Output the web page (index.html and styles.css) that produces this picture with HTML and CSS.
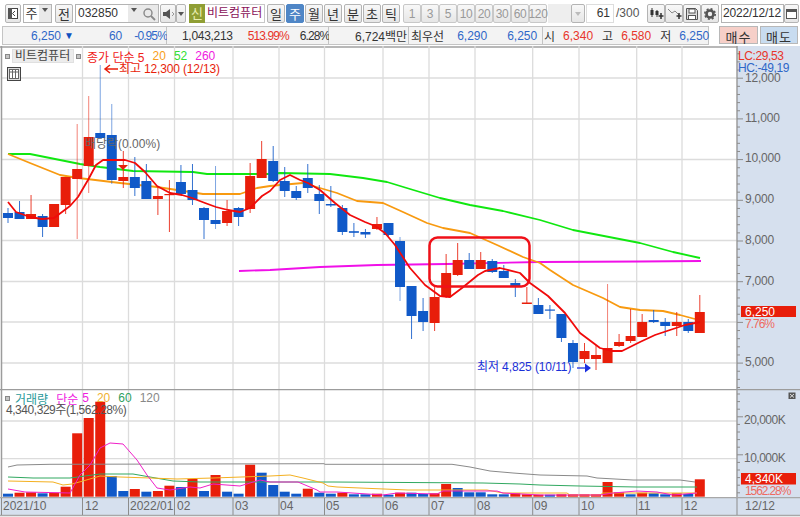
FILE: index.html
```html
<!DOCTYPE html>
<html lang="ko">
<head>
<meta charset="utf-8">
<title>비트컴퓨터 차트</title>
<link rel="stylesheet" href="styles.css">
</head>
<body>
<div class="app">
  <div class="toolbar">
    <button class="btn w16"><svg width="12" height="13" viewBox="0 0 12 13"><rect x="1.5" y="1.5" width="9" height="10" fill="#fff" stroke="#444"/><rect x="1" y="1" width="4" height="11" fill="#555"/><path d="M8 4 5.5 6.5 8 9" fill="none" stroke="#444"/></svg></button>
    <div class="combo m2 w28"><span class="field center">주</span><span class="drop"></span></div>
    <button class="btn w18 m3">전</button>
    <div class="combo m2 w84">
      <span class="field code">032850</span><span class="drop"></span>
      <span class="glyph"><svg width="14" height="14" viewBox="0 0 14 14"><circle cx="6" cy="6" r="4" fill="none" stroke="#888" stroke-width="1.4"/><path d="M9 9l4 4" stroke="#888" stroke-width="1.8"/></svg></span>
    </div>
    <button class="btn w16 m1"><svg width="13" height="12" viewBox="0 0 13 12"><path d="M1 4h3l4-3v10L4 8H1z" fill="#555"/><path d="M10 4l2 2-2 2" fill="none" stroke="#999"/></svg></button>
    <button class="btn w10 tri"></button>
    <span class="new m3">신</span>
    <span class="stock">비트컴퓨터</span>
    <div class="seg m2">
      <button class="btn w18">일</button><button class="btn w18 active">주</button><button class="btn w18">월</button><button class="btn w18">년</button>
    </div>
    <div class="seg m2">
      <button class="btn w18">분</button><button class="btn w18">초</button><button class="btn w18">틱</button>
    </div>
    <div class="seg m3 dim">
      <button class="btn w18">1</button><button class="btn w18">3</button><button class="btn w18">5</button><button class="btn w18">10</button><button class="btn w18">20</button><button class="btn w18">30</button><button class="btn w18">60</button><button class="btn w18">120</button>
    </div>
    <span class="blank m1"></span>
    <button class="btn w14 tri pale"></button>
    <span class="count m1">61</span>
    <span class="total">/300</span>
    <div class="seg icons">
      <button class="btn w18"><svg width="15" height="13" viewBox="0 0 15 13"><path d="M3 1v9M8 3v7" stroke="#333"/><rect x="1.5" y="3" width="3" height="5" fill="#333"/><rect x="6.5" y="4" width="3" height="4" fill="#333"/><path d="M12 6v6M9.500 9h5" stroke="#333" stroke-width="1.500"/></svg></button>
      <button class="btn w18"><svg width="15" height="13" viewBox="0 0 15 13"><path d="M1 2l4 4 3-2 4 4" fill="none" stroke="#888"/><path d="M12 6v6M9.500 9h5" stroke="#333" stroke-width="1.500"/></svg></button>
      <button class="btn w18"><svg width="14" height="14" viewBox="0 0 14 14"><path d="M1.500 1.500h9l2 2v9h-11z" fill="#ddd" stroke="#555"/><rect x="4" y="2" width="6" height="4" fill="#fff" stroke="#555"/><rect x="3.500" y="8.500" width="7" height="4" fill="#fff" stroke="#555"/></svg></button>
      <button class="btn w18"><svg width="14" height="14" viewBox="0 0 14 14"><circle cx="7" cy="7" r="3.500" fill="none" stroke="#555" stroke-width="2.600"/><circle cx="7" cy="7" r="5.200" fill="none" stroke="#555" stroke-width="1.600" stroke-dasharray="2 2.080"/></svg></button>
    </div>
    <span class="date m2">2022/12/12</span>
    <button class="btn w15"><svg width="11" height="11" viewBox="0 0 11 11"><rect x="0.500" y="1.500" width="10" height="9" fill="#fff" stroke="#555"/><rect x="0.500" y="1.500" width="10" height="2.500" fill="#555"/></svg></button>
  </div>

  <div class="quotebar">
    <div class="cell c1"><span class="blue">6,250</span><span class="down blue">▼</span><span class="blue q60">60</span><span class="blue q95 pct">-0.95%</span></div>
    <div class="cell c2"><span class="qvol">1,043,213</span><span class="red qpct pct">513.99%</span><span class="qrate pct">6.28%</span></div>
    <div class="cell c3"><span>6,724백만</span></div>
    <div class="cell c4"><span class="kr">최우선</span><span class="blue b1">6,290</span><span class="blue b2">6,250</span></div>
    <div class="cell c5"><span>시</span><span class="red v1">6,340</span><span class="k">고</span><span class="red v1">6,580</span><span class="k">저</span><span class="blue v1">6,250</span></div>
    <button class="trade buy">매수</button>
    <button class="trade sell">매도</button>
  </div>

  <div class="chart">
    <div class="pane price-pane">
      <svg id="price" class="plot" viewBox="0 46 800 343" width="800" height="343">
        <rect class="axis-bg" x="737" y="46" width="63" height="343"/>
        <g id="price-grid"></g>
        <g id="price-ticks"></g>
        <g id="ma260"></g>
        <g id="ma52"></g>
        <g id="ma20"></g>
        <g id="candles"></g>
        <g id="ma5"></g>
        <rect class="signal" x="429.500" y="237.500" width="100" height="49" rx="8"/>
        <text class="t-note" x="85" y="148">배당락(0.00%)</text>
        <path class="fill-red" d="M118 165h10l-5 5z"/>
        <path class="arrow-red" d="M106 69h12M110 65l-5 4 5 4"/>
        <text class="t-high" x="119" y="73">최고 12,300 (12/13)</text>
        <text class="t-low" x="477" y="371">최저 4,825 (10/11)</text>
        <path class="arrow-blue" d="M577 368h9"/><path class="fill-blue" d="M585 363.500l6 4.500-6 4.500z"/>
        <g class="t-axis">
          <text x="745" y="82">12,000</text><text x="745" y="122">11,000</text><text x="745" y="162">10,000</text><text x="745" y="203">9,000</text><text x="745" y="244">8,000</text><text x="745" y="285">7,000</text><text x="745" y="366">5,000</text>
        </g>
        <text class="t-lc" x="738" y="60">LC:29,53</text>
        <text class="t-hc" x="738" y="72">HC:-49,19</text>
        <rect class="fill-red" x="741" y="306" width="55" height="11"/>
        <text class="t-tag" x="745" y="316">6,250</text>
        <text class="t-pct" x="745" y="328">7.76%</text>
      </svg>
      <div class="legend">
        <span class="sq"></span><span class="name">비트컴퓨터</span><span class="sq"></span>
        <span class="l-red ml6">종가 단순 5</span><span class="l-orange ml8">20</span><span class="l-green ml8">52</span><span class="l-mag ml8">260</span>
      </div>
      <span class="tbl-icon"><svg width="14" height="14" viewBox="0 0 14 14"><rect x="0.500" y="0.500" width="13" height="13" fill="#ddd" stroke="#444"/><rect x="2.500" y="2.500" width="9" height="9" fill="#fff" stroke="#666"/><path d="M2.500 5h9M5.500 2.500v9M8.500 2.500v9" stroke="#666"/></svg></span>
    </div>

    <div class="pane volume-pane">
      <svg id="volume" class="plot" viewBox="0 389 800 108" width="800" height="108">
        <rect class="axis-bg" x="737" y="389" width="63" height="108"/>
        <g id="vol-grid"></g>
        <g id="vol-ticks"></g>
        <g id="vol-bars"></g>
        <g id="vol-lines"></g>
        <g class="t-axis t-k">
          <text x="744" y="424">20,000K</text><text x="744" y="462">10,000K</text>
        </g>
        <rect class="fill-red" x="741" y="473" width="55" height="11.500"/>
        <text class="t-tag" x="745" y="483">4,340K</text>
        <text class="t-pct t-wide" x="745" y="495">1562.28%</text>
        <rect class="close-bg" x="788.500" y="392.500" width="7" height="6.500"/>
        <path class="close-x" d="M790 394l4 3.500M794 394l-4 3.500"/>
      </svg>
      <div class="vol-legend">
        <div class="vol-row"><span class="sq"></span><span class="l-teal ml5">거래량</span><span class="l-mag ml8">단순</span><span class="l-mag ml4">5</span><span class="l-orange2 ml8">20</span><span class="l-green2 ml8">60</span><span class="l-gray ml8">120</span></div>
        <div class="vol-info">4,340,329주(1,562.28%)</div>
      </div>
    </div>

    <div class="pane time-axis">
      <svg id="time" class="plot" viewBox="0 497 800 20" width="800" height="20">
        <rect class="time-bg" x="0" y="498" width="800" height="17"/>
        <path class="time-line" d="M0 497.500H800M0 515.500H800"/>
        <g id="time-ticks"></g>
        <g class="t-time">
          <text x="3" y="510">2021/10</text><text x="85" y="510">12</text><text x="130" y="510">2022/01</text><text x="177" y="510">02</text><text x="235" y="510">03</text><text x="280" y="510">04</text><text x="326" y="510">05</text><text x="385" y="510">06</text><text x="431" y="510">07</text><text x="477" y="510">08</text><text x="534" y="510">09</text><text x="581" y="510">10</text><text x="638" y="510">11</text><text x="684" y="510">12</text><text x="745" y="510">12/12</text>
        </g>
      </svg>
    </div>
  </div>
</div>
<script src="chart.js"></script>
</body>
</html>
```
FILE: styles.css
```css
* { box-sizing: border-box; }
html, body { margin: 0; padding: 0; background: #fff; }
body { font: 12px "Liberation Sans", "Noto Sans CJK KR", sans-serif; color: #333; }
.app { width: 800px; height: 517px; overflow: hidden; display: flex; flex-direction: column; }

.toolbar { height: 26px; padding: 4px 0 0 5px; display: flex; align-items: flex-start; background: #fff; }
.btn { height: 19px; padding: 0; border: 1px solid #b4b4b4; border-radius: 2px; background: linear-gradient(#f8f8f8, #e6e6e6); font: 13px "Liberation Sans", "Noto Sans CJK KR", sans-serif; color: #333; display: inline-flex; align-items: center; justify-content: center; flex: none; }
.w10 { width: 10px; } .w14 { width: 14px; } .w15 { width: 15px; } .w16 { width: 16px; } .w18 { width: 18px; } .w28 { width: 29px; } .w84 { width: 84px; }
.m1 { margin-left: 1px; } .m2 { margin-left: 2px; } .m3 { margin-left: 3px; }
.active { background: #4f86c6; border-color: #4f86c6; color: #fff; }
.combo { height: 19px; display: flex; border: 1px solid #b4b4b4; background: #e9e9e9; flex: none; }
.field { background: #fff; font-size: 13px; line-height: 17px; flex: 1; }
.center { text-align: center; }
.code { padding-left: 2px; flex: 0 0 52px; font-size: 12px; }
.drop { flex: 0 0 12px; position: relative; }
.drop::after, .tri::after { content: ""; border: 3px solid transparent; border-top: 4px solid #555; margin-top: 3px; }
.drop::after { position: absolute; left: 3px; top: 3px; margin: 0; }
.pale::after { border-top-color: #bbb; }
.glyph { flex: 1; display: flex; align-items: center; justify-content: center; }
.new { width: 16px; height: 19px; background: #8f9e34; color: #e8edb0; text-align: center; font-size: 13px; line-height: 19px; flex: none; }
.stock { width: 60px; height: 19px; background: #fff; border: 1px solid #c8c8c8; border-left: 0; color: #8a1258; font-size: 12px; line-height: 17px; padding-left: 2px; flex: none; white-space: nowrap; }
.seg { display: flex; gap: 1px; flex: none; }
.seg.dim { gap: 0; }
.dim .btn { color: #999; font-size: 12px; letter-spacing: -.4px; border-color: #c8c8c8; }
.blank { width: 23px; height: 19px; background: #eee; flex: none; }
.count { width: 28px; height: 19px; background: #fff; border: 1px solid #ddd; text-align: right; padding-right: 3px; line-height: 17px; font-size: 12px; flex: none; }
.total { width: 33px; line-height: 19px; padding-left: 2px; color: #555; flex: none; }
.icons { gap: 0; }
.date { width: 63px; height: 19px; border: 1px solid #b4b4b4; background: #fff; line-height: 17px; padding-left: 1px; white-space: nowrap; flex: none; letter-spacing: -.2px; }

.quotebar { height: 20px; display: flex; align-items: stretch; padding: 0 0 1px 2px; background: #fff; flex: none; }
.cell { background: #f3f3f3; border: 1px solid #c4c4c4; border-left: 0; display: flex; align-items: center; white-space: nowrap; font-size: 12px; color: #333; flex: none; }
.c1 { width: 165px; padding-left: 28px; border-left: 1px solid #c4c4c4; }
.c2 { width: 162px; padding-left: 15px; }
.c3 { width: 80px; padding-left: 26px; }
.c4 { width: 134px; padding-left: 2px; }
.c5 { width: 166px; padding-left: 1px; }
.blue { color: #2f67c8; }
.red { color: #e8352a; }
.down { margin-left: 3px; font-size: 10px; color: #1050c0; }
.pct { letter-spacing: -.9px; }
.q60 { margin-left: 35px; } .q95 { margin-left: 12px; }
.qvol { letter-spacing: -.3px; }
.qpct { margin-left: 15px; } .qrate { margin-left: 11px; }
.b1 { margin-left: 13px; } .b2 { margin-left: 20px; }
.v1 { margin-left: 8px; } .k { margin-left: 9px; }
.trade { height: 18px; border: 1px solid #b8b8b8; font: 13px "Noto Sans CJK KR", sans-serif; color: #333; padding: 0; flex: none; letter-spacing: 1px; }
.buy { width: 39px; margin-left: 10px; background: #f6cfc8; }
.sell { width: 38px; margin-left: 2px; background: #c8dcf0; }

.chart { flex: 1; display: flex; flex-direction: column; border-top: 2px solid #b8b8b8; }
.pane { position: relative; flex: none; }
.price-pane { height: 341px; }
.price-pane .plot { margin-top: -2px; }
.volume-pane { height: 108px; }
.time-axis { height: 20px; }
.plot { display: block; }

.axis-bg, .time-bg { fill: #d6e0ee; }
.grid-line { stroke: #dcdcdc; stroke-width: 1.300; }
.edge-line { stroke: #9c9c9c; stroke-width: 1.500; }
.tick { stroke: #8c8c8c; stroke-width: 1; }
.time-line { stroke: #a8a8a8; stroke-width: 1.500; fill: none; }
.ma { fill: none; stroke-linejoin: round; }
.fill-red { fill: #e81e0a; }
.fill-blue { fill: #1a30e0; }
.signal { fill: none; stroke: #f01018; stroke-width: 2.500; }
.arrow-red { fill: none; stroke: #e81e0a; stroke-width: 1.500; }
.arrow-blue { stroke: #1a30e0; stroke-width: 1.300; }
.close-bg { fill: #555; }
.close-x { stroke: #ddd; stroke-width: 1; }

.plot text { font: 12px "Liberation Sans", "Noto Sans CJK KR", sans-serif; }
.plot .t-note { fill: #666; font-size: 12px; }
.plot .t-high { fill: #e81e0a; letter-spacing: -.15px; }
.plot .t-low { fill: #1a30d8; letter-spacing: -.1px; }
.plot .t-axis text { fill: #666; font-size: 12px; letter-spacing: -.2px; }
.plot .t-k text { letter-spacing: -.5px; }
.plot .t-lc { fill: #e8352a; font-size: 12px; letter-spacing: -.4px; }
.plot .t-hc { fill: #2f67c8; font-size: 12px; letter-spacing: -.4px; }
.plot .t-tag { fill: #fff; font-size: 12px; }
.plot .t-pct { fill: #ee6a60; font-size: 12px; letter-spacing: -1px; }
.plot .t-wide { letter-spacing: -1.100px; }
.plot .t-time text { fill: #666; font-size: 12px; }

.legend { position: absolute; left: 5px; top: 1px; height: 14px; display: flex; align-items: center; white-space: nowrap; font-size: 12px; }
.sq { width: 5px; height: 5px; background: #c4c4c4; border: 1px solid #888; flex: none; }
.name { background: #ececec; border: 1px solid #e0e0e0; color: #444; height: 14px; line-height: 12px; width: 62px; margin: 0 2px; padding-left: 2px; flex: none; }
.ml4 { margin-left: 4px; } .ml5 { margin-left: 5px; } .ml6 { margin-left: 6px; } .ml8 { margin-left: 8px; }
.l-red { color: #f02018; } .l-orange { color: #f8a020; } .l-green { color: #30e030; } .l-mag { color: #f020e0; }
.l-teal { color: #2a9a9a; } .l-orange2 { color: #f0b030; } .l-green2 { color: #30a060; } .l-gray { color: #888; }
.tbl-icon { position: absolute; left: 7px; top: 19px; line-height: 0; }
.vol-legend { position: absolute; left: 5px; top: 3px; font-size: 12px; white-space: nowrap; }
.vol-row { display: flex; align-items: center; height: 12px; }
.vol-info { color: #555; height: 13px; line-height: 13px; margin-left: 1px; letter-spacing: -.45px; }
```
FILE: chart.js
```js
var NS = 'http://www.w3.org/2000/svg';
function add(parentId, tag, attrs) {
  var el = document.createElementNS(NS, tag);
  for (var k in attrs) el.setAttribute(k, attrs[k]);
  document.getElementById(parentId).appendChild(el);
  return el;
}
function lineTo(id, cls, x1, y1, x2, y2) {
  add(id, 'line', { 'class': cls, x1: x1, y1: y1, x2: x2, y2: y2 });
}
function ma(id, color, width, pts) {
  add(id, 'polyline', { 'class': 'ma', stroke: color, 'stroke-width': width, points: pts.join(' ') });
}
var RED = '#e81e0a', BLUE = '#1059c8';
var months = [82.5, 128.5, 174.5, 233, 279, 324.5, 383, 429, 475, 532.7, 579, 636.7, 682];

/* price grid */
[78, 119, 159.5, 200, 240.5, 281.5, 322, 363].forEach(function (y) { lineTo('price-grid', 'grid-line', 2, y, 737, y); });
months.forEach(function (x) { lineTo('price-grid', 'grid-line', x, 46, x, 389); });
lineTo('price-grid', 'edge-line', 1.5, 46, 1.5, 389);
lineTo('price-grid', 'edge-line', 737, 46, 737, 389);
for (var y = 37.3, n = 0; y < 389; y += 8.14, n++) {
  if (y > 46) lineTo('price-ticks', 'tick', 737, y + 0.2, n % 5 === 0 ? 743 : 740, y + 0.2);
}

/* [color, wickTop, wickBottom, bodyTop, bodyBottom] */
var c = [
  ['b',208,223,213,218],['b',201,219,212,219],['r',195,219,214,219],['b',214,237,216,227],['r',204,227,204,227],
  ['r',177,214,177,205],['r',124,239,169,179],['r',96,193,137,166],['b',65,138,133,138],['b',104,184,135,180],
  ['r',151,188,177,181],['b',157,196,177,188],['b',164,199,181,199],['r',187,215,196,199],['r',180,232,194,195],
  ['b',165,194,182,194],['b',164,205,190,200],['b',207,239,208,220],['b',166,229,220,224],['r',200,226,211,223],
  ['b',207,226,208,217],['r',163,213,176,209],['r',141,178,159,178],['b',146,182,161,181],['b',167,197,181,191],
  ['b',186,200,191,198],['b',164,193,178,188],['b',185,214,194,201],['b',186,207,204,205.5],['b',205,235,208,232],
  ['b',223,237,231.2,232.8],['b',229,238,232,234.5],['r',217,230,224,229],['b',223,236,223,235],['b',237,301,241,287],
  ['b',286,339,286,316],['b',298,331,311,322],['r',285,331,297,323],['r',254,298,273,297],['r',243,276,260,275],
  ['b',253,269,260,269],['r',252,269,260,269],['b',259,273,261,272],['b',265,278,271,278],['b',279,297,283,286],
  ['r',287,303,302.5,304],['b',298,314,305,314],['b',305,319,309.5,310.5],['b',314,342,314,338],['b',340,368,343,362],
  ['r',343,363,351,359],['r',345,370,355,359],['r',284,363,348,363],['r',334,347,342,346],['r',309,343,336,341],
  ['r',314,337,322,337],['b',310,323,320,322],['b',318,336,322,326],['r',312,336,322,326],['b',319,333,322,331],
  ['r',295,333,312,333]
];
function cx(i) { return 8 + 11.53 * i; }
c.forEach(function (d, i) {
  var x = cx(i), col = d[0] === 'r' ? RED : BLUE;
  add('candles', 'line', { x1: x, y1: d[1], x2: x, y2: d[2], stroke: col, 'stroke-width': 1, 'stroke-opacity': (d[2] - d[1] > 60 ? .55 : .85) });
  add('candles', 'rect', { x: x - 5, y: d[3], width: 10, height: Math.max(d[4] - d[3], 1.2), fill: col });
});

ma('ma260', '#f010e8', 1.8, ['239,271','270,270','320,267','377,265','447,264','540,262','640,261.5','701,261']);
ma('ma52', '#10e810', 1.8, ['8,154','30,154','50,158','80,164','100,167','133,171','193,172','207,174','270,174','280,173','330,174','363,178','387,182','410,189','440,198','470,205','503,211','540,220','573,230','640,243','673,252','700,258']);
ma('ma20', '#f89a10', 1.8, ['8,154','30,163','60,175','78,178','87,179','120,183','157,187','177,190','203,194','240,194','257,188','270,186','280,185','303,183','337,193','357,201','383,203','403,212','427,223','443,228','470,233','497,245','523,257','540,263','550,270','573,285','603,298','620,307','640,310','663,311','680,315','695,319']);
ma('ma5', '#f00a0a', 1.8, ['8,202','16,212','30,217','42,219','54,218','62,212','70,206','78,197','88,180','96,165','103,160','115,160','125,160','135,163','145,172','157,186','170,193','182,195','192,198','205,203','216,207','228,210','240,212','250,208','262,196','270,191','280,180','290,175','300,180','308,183','320,190','335,203','350,215','365,222','375,226','385,233','395,245','410,268','425,285','440,296','450,297','462,288','478,275','485,271','500,268','520,273','530,283','548,296','565,313','580,333','600,348','612,351','622,351','640,342','655,335','670,330','685,325','700,322']);

/* volume */
[421, 458.7].forEach(function (y) { lineTo('vol-grid', 'grid-line', 2, y, 737, y); });
months.forEach(function (x) { lineTo('vol-grid', 'grid-line', x, 389, x, 497); });
lineTo('vol-grid', 'edge-line', 0, 389.5, 800, 389.5);
lineTo('vol-grid', 'edge-line', 1.5, 389, 1.5, 497);
lineTo('vol-grid', 'edge-line', 737, 389, 737, 497);
for (var v = 394, m = 0; v < 497; v += 7.6, m++) {
  lineTo('vol-ticks', 'tick', 737, v, (m === 3 || m === 8 ) ? 743 : 740, v);
}
var vol = [
  ['b',493.7],['r',492.7],['r',492.3],['b',493.3],['r',492.7],['r',486.7],['r',433.3],['r',418],['r',401.7],['b',476],
  ['b',491],['r',489],['b',491.7],['r',491],['r',485.7],['b',487],['r',479],['b',491],['r',475],['b',491.7],
  ['b',493.7],['r',464.7],['b',472.7],['b',485],['b',491.7],['b',493.7],['r',488.7],['b',492.7],['b',493.7],['r',492.7],
  ['b',494.3],['b',494.3],['r',493.7],['b',494.7],['r',492.7],['b',492.7],['b',494],['r',493.3],['r',484],['b',488],
  ['b',492.3],['b',492.3],['b',494.3],['b',494.3],['r',493.3],['r',494.3],['r',494.7],['b',494.7],['r',494.3],['r',494.3],
  ['r',494.3],['r',494.3],['r',482],['r',492.3],['b',494.3],['r',492.7],['b',493.3],['b',494.3],['r',493.3],['b',494],
  ['r',479.3]
];
vol.forEach(function (d, i) {
  add('vol-bars', 'rect', { x: cx(i) - 5, y: d[1], width: 10, height: 496.7 - d[1], fill: d[0] === 'r' ? RED : BLUE });
});
ma('vol-lines', '#8a8a8a', 1, ['8,467','17,465','50,464.3','324,463.7','325,464.3','452,464.3','470,467','490,471','513,473','540,475','587,476','597,478','633,480','680,480','695,482']);
ma('vol-lines', '#30a860', 1, ['8,477','33,478','70,478','100,474','133,474','150,477','173,481','200,482','270,482','333,482','483,483','520,484','540,485','580,486','637,487','697,487']);
ma('vol-lines', '#f4b020', 1, ['8,481','53,482','63,485','72,484','83,481','100,476','120,477','150,478','177,479','213,478','270,476','290,475','303,478','323,483','328,486','337,487','360,488','408,490','487,490','503,493','567,493','570,495','600,495','603,493','697,493']);
ma('vol-lines', '#f020c8', 1, ['8,489','25,492','70,493','80,475','90,465','100,448','110,443','123,444','137,460','147,475','157,488','170,490','190,487','200,488','213,484','240,486','260,480','270,482','298,482','317,490','320,492','337,492','383,495','397,493','437,494','443,491','497,491','503,493','540,495','600,495','613,493','637,491','657,492','673,495','697,493']);

/* time axis */
months.concat([737]).forEach(function (x) { lineTo('time-ticks', 'tick', x, 498, x, 515); });
lineTo('time-ticks', 'tick', 1.5, 498, 1.5, 515);
```
